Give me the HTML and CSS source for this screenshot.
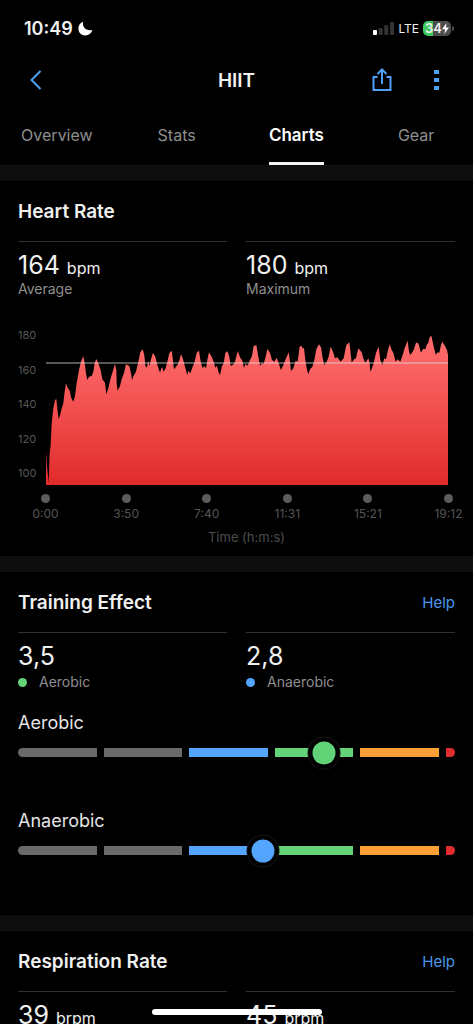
FILE: index.html
```html
<!DOCTYPE html>
<html lang="en">
<head>
<meta charset="utf-8">
<meta name="viewport" content="width=device-width, initial-scale=1">
<title>HIIT</title>
<link rel="stylesheet" href="styles.css">
</head>
<body>
<div class="app">
  <div class="status">
    <div class="status-side">
      <span class="clock">10:49</span>
      <svg class="moon" viewBox="0 0 15 15" aria-hidden="true"><path d="M5.200.800C3.600 5.600 8.200 10.800 14.500 9C13.300 12.300 10.700 14.500 7.300 14.500C3.200 14.500.4 11.500.4 7.500C.4 4.400 2.300 1.800 5.200.800Z" fill="#fff"/></svg>
    </div>
    <div class="status-side status-right">
      <svg class="signal" viewBox="0 0 21 13" aria-hidden="true">
        <rect x="0" y="8" width="4" height="5" rx="1" fill="#fff"/>
        <rect x="5.700" y="6" width="4" height="7" rx="1" fill="#333"/>
        <rect x="11.300" y="3" width="4" height="10" rx="1" fill="#333"/>
        <rect x="17" y="0" width="4" height="13" rx="1" fill="#333"/>
      </svg>
      <span class="network">LTE</span>
      <span class="battery">
        <span class="battery-level">34</span>
        <svg class="bolt" viewBox="0 0 7 11" aria-hidden="true"><path d="M4.500 0L0 6.200H3L2.300 11L7 4.600H4Z" fill="#fff"/></svg>
      </span>
    </div>
  </div>

  <header class="bar">
    <button class="icon-button" aria-label="Back">
      <svg width="12" height="20" viewBox="0 0 12 20"><path d="M10.500 1L1.500 10L10.500 19" fill="none" stroke="#4ea1f7" stroke-width="2"/></svg>
    </button>
    <h1 class="title">HIIT</h1>
    <div class="actions">
      <button class="icon-button" aria-label="Share">
        <svg width="20" height="24" viewBox="0 0 20 24"><path d="M5.500 9H1.500V22H18.500V9H14.500M10 16V1.500M5.500 6L10 1.500L14.500 6" fill="none" stroke="#4ea1f7" stroke-width="2"/></svg>
      </button>
      <button class="icon-button" aria-label="More">
        <svg width="6" height="20" viewBox="0 0 6 20"><path d="M0 0h5v4h-5zM0 8h5v4h-5zM0 16h5v4h-5z" fill="#4ea1f7"/></svg>
      </button>
    </div>
  </header>

  <nav class="tabs">
    <a class="tab" href="#overview">Overview</a>
    <a class="tab" href="#stats">Stats</a>
    <a class="tab tab-active" href="#charts" aria-current="page">Charts</a>
    <a class="tab" href="#gear">Gear</a>
  </nav>

  <main class="content">
    <section class="card">
      <div class="card-head"><h2 class="card-title">Heart Rate</h2></div>
      <div class="stats">
        <div class="stat">
          <div class="value">164 <span class="unit">bpm</span></div>
          <div class="label">Average</div>
        </div>
        <div class="stat">
          <div class="value">180 <span class="unit">bpm</span></div>
          <div class="label">Maximum</div>
        </div>
      </div>
      <div class="chart">
        <div class="y-axis"><span>180</span><span>160</span><span>140</span><span>120</span><span>100</span></div>
        <div class="plot-area">
          <svg class="plot" viewBox="138 45 1206 450" preserveAspectRatio="none" role="img" aria-label="Heart Rate">
            <defs>
              <linearGradient id="heat" x1="0" y1="0" x2="0" y2="1">
                <stop offset="0" stop-color="#ff6b6b"/>
                <stop offset="0.180" stop-color="#fc6464"/>
                <stop offset="1" stop-color="#e12b2b"/>
              </linearGradient>
            </defs>
            <polygon fill="url(#heat)" points="138,495 138,393 141,440 146,486 149,400 152,375 155,310 160,265 165,240 169,237 173,275 176,298 181,283 185,265 190,250 194,215 198,190 203,203 209,212 214,235 220,245 225,228 230,190 237,150 243,125 250,108 254,130 258,160 262,180 267,170 275,168 280,155 284,130 289,117 295,130 302,150 307,178 315,188 319,222 325,205 332,175 338,155 345,132 349,150 350,190 353,212 360,198 366,175 372,160 378,133 388,138 393,160 396,180 402,165 408,155 415,125 421,97 428,88 433,105 436,137 441,143 444,123 449,137 453,118 459,98 466,110 472,135 480,158 484,145 487,142 490,155 497,145 502,125 508,100 515,92 518,115 522,148 528,140 534,132 539,118 543,102 549,118 555,140 562,165 565,152 571,160 578,140 584,125 590,98 597,92 602,125 608,145 613,138 618,145 623,115 627,97 635,110 641,125 646,143 651,137 655,155 660,165 666,138 671,130 676,100 682,93 688,110 692,138 698,135 704,128 710,105 714,93 720,112 727,122 732,143 737,132 743,137 750,120 756,108 761,78 769,75 774,105 780,137 786,130 791,132 797,110 802,87 810,98 816,120 823,125 830,113 836,130 843,150 850,135 857,118 866,97 870,125 873,153 880,145 887,122 893,125 899,80 904,77 908,85 912,85 916,120 920,145 925,163 930,148 937,140 943,120 949,88 957,73 963,82 968,115 973,135 980,125 986,110 992,80 999,95 1005,115 1012,112 1022,125 1031,115 1039,75 1048,67 1052,100 1055,128 1062,118 1068,115 1075,85 1085,97 1091,118 1096,128 1105,115 1109,128 1111,155 1116,145 1122,125 1128,98 1136,80 1141,120 1147,135 1153,115 1158,118 1164,90 1169,73 1175,90 1180,98 1187,125 1193,118 1201,125 1208,105 1214,85 1223,62 1227,95 1231,105 1236,98 1241,90 1248,68 1255,70 1263,98 1269,87 1276,88 1280,75 1285,68 1289,52 1294,47 1300,75 1307,104 1313,97 1318,98 1323,75 1327,65 1335,78 1341,90 1344,105 1344,495"/>
            <rect x="138" y="127" width="1206" height="4" fill="#dcdcdc" fill-opacity="0.600"/>
          </svg>
          <div class="x-axis">
            <span class="tick">0:00</span><span class="tick">3:50</span><span class="tick">7:40</span><span class="tick">11:31</span><span class="tick">15:21</span><span class="tick">19:12</span>
          </div>
        </div>
      </div>
      <div class="axis-title">Time (h:m:s)</div>
    </section>

    <section class="card">
      <div class="card-head"><h2 class="card-title">Training Effect</h2><a class="help" href="#training-help">Help</a></div>
      <div class="stats">
        <div class="stat">
          <div class="value">3,5</div>
          <div class="label legend"><span class="dot green"></span>Aerobic</div>
        </div>
        <div class="stat">
          <div class="value">2,8</div>
          <div class="label legend"><span class="dot blue"></span>Anaerobic</div>
        </div>
      </div>
      <div class="gauges">
        <div class="gauge">
          <h3 class="gauge-title">Aerobic</h3>
          <div class="track">
            <span class="seg grey"></span><span class="seg grey"></span><span class="seg blue"></span><span class="seg green"></span><span class="seg orange"></span><span class="seg red"></span>
            <span class="marker green" style="left: 70%"></span>
          </div>
        </div>
        <div class="gauge">
          <h3 class="gauge-title">Anaerobic</h3>
          <div class="track">
            <span class="seg grey"></span><span class="seg grey"></span><span class="seg blue"></span><span class="seg green"></span><span class="seg orange"></span><span class="seg red"></span>
            <span class="marker blue" style="left: 56%"></span>
          </div>
        </div>
      </div>
    </section>

    <section class="card">
      <div class="card-head"><h2 class="card-title">Respiration Rate</h2><a class="help" href="#respiration-help">Help</a></div>
      <div class="stats">
        <div class="stat"><div class="value">39 <span class="unit">brpm</span></div></div>
        <div class="stat"><div class="value">45 <span class="unit">brpm</span></div></div>
      </div>
    </section>
  </main>
  <div class="home-indicator"></div>
</div>
</body>
</html>
```
FILE: styles.css
```css
* { box-sizing: border-box; }

body {
  margin: 0;
  background: #000;
  color: #f0f0f0;
  font-family: Inter, "Liberation Sans", sans-serif;
}

h1, h2, h3 { margin: 0; }
a { text-decoration: none; }

.app {
  display: flex;
  flex-direction: column;
  height: 100vh;
}

.status {
  display: flex;
  justify-content: space-between;
  align-items: center;
  height: 56px;
  padding: 0 20px 0 24px;
}

.status-side { display: flex; align-items: center; gap: 5px; }
.status-right { gap: 4px; }
.clock { font-size: 18px; font-weight: 600; }
.moon { width: 15px; height: 15px; }
.signal { width: 21px; height: 13px; }
.network { font-size: 12px; font-weight: 400; }

.battery {
  position: relative;
  display: flex;
  align-items: center;
  justify-content: center;
  width: 28px;
  height: 15px;
  margin-right: 2px;
  border-radius: 5px;
  background: linear-gradient(90deg, #3fc75f 34%, #4d4d4d 34%);
}

.battery::after {
  content: "";
  position: absolute;
  top: 5px;
  right: -3px;
  width: 2px;
  height: 5px;
  border-radius: 0 2px 2px 0;
  background: #4d4d4d;
}

.battery-level { font-size: 13px; font-weight: 600; line-height: 15px; }
.bolt { width: 7px; height: 11px; }

.bar {
  display: grid;
  grid-template-columns: 1fr auto 1fr;
  align-items: center;
  height: 48px;
  padding: 0 17px;
}

.icon-button {
  display: flex;
  align-items: center;
  justify-content: center;
  width: 38px;
  height: 38px;
  padding: 0;
  border: 0;
  background: none;
}

.title { font-size: 19px; font-weight: 600; }
.actions { display: flex; justify-content: flex-end; gap: 17px; }

.tabs {
  display: grid;
  grid-template-columns: repeat(4, 1fr);
  justify-items: center;
  height: 61px;
  margin: 0 -3px;
}

.tab {
  border-bottom: 3px solid transparent;
  color: #8e8e8e;
  font-size: 16px;
  line-height: 62px;
  height: 61px;
}

.tab-active { border-color: #f4f4f4; color: #fff; font-size: 17px; font-weight: 600; }

.content { flex: 1; overflow-y: auto; scrollbar-width: none; }

.card {
  padding: 18px 18px 0;
  border-top: 16px solid #0e0e0e;
}

.card-head {
  display: flex;
  align-items: center;
  justify-content: space-between;
  height: 24px;
}

.card-title { font-size: 19px; font-weight: 600; }
.help { color: #4a98ea; font-size: 15px; }

.stats {
  display: grid;
  grid-template-columns: 1fr 1fr;
  gap: 19px;
  margin-top: 18px;
}

.stat { border-top: 1px solid #303030; padding-top: 8px; }
.value { font-size: 25px; line-height: 30px; }
.unit { font-size: 16px; line-height: 16px; }
.label { display: flex; align-items: center; color: #8e8e8e; font-size: 14px; line-height: 18px; }
.legend { line-height: 22px; }

.dot {
  width: 9px;
  height: 9px;
  margin-right: 12px;
  border-radius: 50%;
}

.chart { display: flex; gap: 8px; margin-top: 29px; color: #565656; }

.y-axis {
  display: flex;
  flex-direction: column;
  justify-content: space-between;
  width: 20px;
  height: 154px;
  font-size: 11px;
  line-height: 16px;
}

.plot-area { flex: 1; margin: 8px 7px 0 0; }
.plot { display: block; width: 100%; height: 150px; }

.x-axis {
  display: flex;
  justify-content: space-between;
  margin: 9px -5px 0;
  font-size: 12px;
  line-height: 16px;
}

.tick {
  display: flex;
  flex-direction: column;
  align-items: center;
  gap: 3px;
  width: 9px;
}

.tick::before {
  content: "";
  flex: none;
  width: 9px;
  height: 9px;
  border-radius: 50%;
  background: #5c5c5c;
}

.axis-title {
  margin: 6px 0 10px 0;
  padding-left: 20px;
  color: #4c4c4c;
  font-size: 13px;
  line-height: 18px;
  text-align: center;
}

.gauges { display: grid; gap: 52px; margin-top: 18px; padding-bottom: 60px; }
.gauge-title { font-size: 18px; font-weight: 400; line-height: 24px; color: #e4e4e4; }

.track {
  position: relative;
  display: grid;
  grid-template-columns: repeat(5, 79fr) 9fr;
  gap: 7px;
  margin-top: 13px;
}

.seg { height: 9px; }
.seg:first-child { border-radius: 5px 0 0 5px; }
.red { border-radius: 0 5px 5px 0; }

.marker {
  position: absolute;
  top: 50%;
  width: 23px;
  height: 23px;
  border-radius: 50%;
  transform: translate(-50%, -50%);
  box-shadow: 0 0 0 4px #000, 0 0 0 5px #141414;
}

.grey { background: #6a6a6a; }
.blue { background: #54a5ff; }
.green { background: #62d377; }
.orange { background: #ff9f38; }
.red { background: #e12d2d; }

.home-indicator {
  position: fixed;
  bottom: 9px;
  left: 50%;
  width: 170px;
  height: 6px;
  border-radius: 3px;
  background: #fff;
  transform: translateX(-50%);
}
```
